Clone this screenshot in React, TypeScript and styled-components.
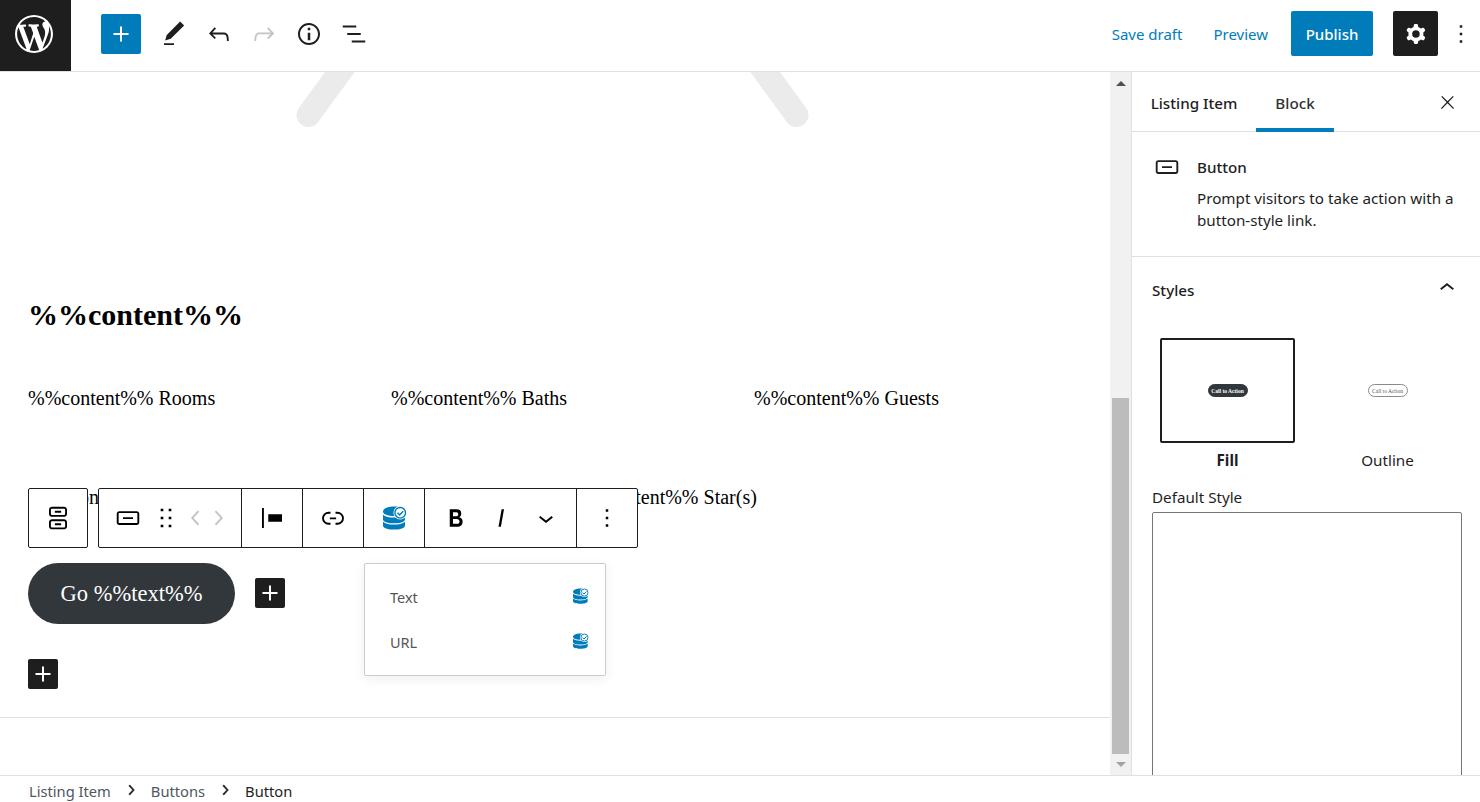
import React from 'react'
import styled, { createGlobalStyle } from 'styled-components'

const GlobalStyle = createGlobalStyle`
  html, body {
    margin: 0;
    height: 100%;
    overflow: hidden;
    background: #fff;
  }
  * {
    box-sizing: border-box;
  }
`

const uiFont = `"Noto Sans", "Open Sans", sans-serif`
const contentFont = `"Liberation Serif", serif`
const blue = '#007cba'
const dark = '#1e1e1e'
const line = '#e0e0e0'

const Page = styled.div`
  width: 1480px;
  height: 802px;
  display: flex;
  flex-direction: column;
  font-family: ${uiFont};
  color: ${dark};
`

const Header = styled.header`
  height: 72px;
  flex: none;
  display: flex;
  align-items: flex-start;
  border-bottom: 1px solid ${line};
`

const LogoTile = styled.div`
  width: 71px;
  height: 71px;
  padding: 0 4px 3px 0;
  background: ${dark};
  color: #fff;
  display: flex;
  align-items: center;
  justify-content: center;
`

const HeaderTools = styled.div`
  height: 68px;
  display: flex;
  align-items: center;
  gap: 5px;
  margin-left: 30px;
`

const AddButton = styled.button`
  width: 40px;
  height: 40px;
  margin-right: 8px;
  padding: 0;
  border: 0;
  border-radius: 2px;
  background: ${blue};
  color: #fff;
  display: flex;
  align-items: center;
  justify-content: center;
`

const ToolButton = styled.button<{ $muted?: boolean }>`
  width: 40px;
  height: 40px;
  padding: 0;
  border: 0;
  background: none;
  color: ${({ $muted }) => ($muted ? '#c4c4c4' : dark)};
  display: flex;
  align-items: center;
  justify-content: center;
`

const HeaderActions = styled.div`
  height: 67px;
  margin-left: auto;
  display: flex;
  align-items: center;
`

const TextLink = styled.a<{ $gap: number }>`
  color: ${blue};
  font-size: 15px;
  margin-right: ${({ $gap }) => $gap}px;
`

const PublishButton = styled.button`
  width: 82px;
  height: 45px;
  border: 0;
  border-radius: 2px;
  background: ${blue};
  color: #fff;
  font-family: ${uiFont};
  font-size: 15px;
  font-weight: 500;
  padding: 0;
`

const SettingsButton = styled.button`
  width: 45px;
  height: 45px;
  margin-left: 20px;
  padding: 0;
  border: 0;
  border-radius: 2px;
  background: ${dark};
  color: #fff;
  display: flex;
  align-items: center;
  justify-content: center;
`

const KebabButton = styled.button`
  width: 30px;
  height: 45px;
  margin: 0 4px 0 8px;
  padding: 0;
  border: 0;
  background: none;
  color: ${dark};
  display: flex;
  align-items: center;
  justify-content: center;
`

const Main = styled.div`
  flex: 1;
  min-height: 0;
  display: flex;
`

const Canvas = styled.main`
  width: 1110px;
  flex: none;
  position: relative;
  overflow: hidden;
  font-family: ${contentFont};
  color: #000;
`

const Placeholder = styled.svg`
  display: block;
  width: 1110px;
  height: 60px;
  color: #ebebeb;
`

const Heading = styled.h2`
  margin: 163px 0 0 28px;
  font-size: 30px;
  line-height: 40px;
  font-weight: 700;
  font-kerning: none;
`

const Columns = styled.div`
  margin: 49px 0 0 28px;
  display: grid;
  grid-template-columns: repeat(3, 363px);
  font-size: 20px;
  line-height: 28px;
`

const StarRow = styled.div`
  margin: 71px 0 0 28px;
  display: grid;
  grid-template-columns: 545px 1fr;
  font-size: 20px;
  line-height: 28px;
`

const ButtonRow = styled.div`
  margin: 52px 0 0 28px;
  display: flex;
  align-items: center;
  gap: 20px;
`

const PillButton = styled.div`
  width: 207px;
  height: 61px;
  border-radius: 31px;
  background: #32373c;
  color: #fff;
  font-size: 22.5px;
  display: flex;
  align-items: center;
  justify-content: center;
`

const InserterButton = styled.button`
  width: 30px;
  height: 30px;
  padding: 0;
  border: 0;
  border-radius: 2px;
  background: ${dark};
  color: #fff;
  display: flex;
  align-items: center;
  justify-content: center;
`

const InlineInserter = styled(InserterButton)`
  margin-bottom: 2px;
`

const AppenderRow = styled.div`
  margin: 35px 0 0 28px;
`

const EndRule = styled.hr`
  margin: 28px 0 0;
  border: 0;
  border-top: 1px solid ${line};
`

const BlockToolbar = styled.div`
  position: absolute;
  top: 416px;
  left: 28px;
  display: flex;
  gap: 10px;
`

const ToolbarGroup = styled.div`
  height: 60px;
  display: flex;
  background: #fff;
  border: 1px solid ${dark};
  border-radius: 2px;
`

const ToolbarCell = styled.div<{ $width: number; $last?: boolean }>`
  width: ${({ $width }) => $width}px;
  display: flex;
  align-items: center;
  justify-content: center;
  border-right: ${({ $last }) => ($last ? 'none' : `1px solid ${dark}`)};
`

const BlockCell = styled(ToolbarCell)`
  justify-content: flex-start;
  padding-left: 14px;
  gap: 7px;
`

const MoverIcons = styled.div`
  display: flex;
  margin-left: -8px;
  color: #c4c4c4;

  & > svg + svg {
    margin-left: -8px;
  }
`

const DatabaseCell = styled(ToolbarCell)`
  padding-left: 2px;
`

const ToolSpacer = styled.span`
  width: 15px;
`

const Popover = styled.div`
  position: absolute;
  top: 491px;
  left: 364px;
  width: 242px;
  height: 113px;
  padding: 10px 16px 0 25px;
  background: #fff;
  border: 1px solid #ccc;
  border-radius: 2px;
  box-shadow: 0 3px 12px rgba(25, 30, 35, 0.07);
  font-family: ${uiFont};
`

const PopoverRow = styled.div`
  height: 45px;
  display: flex;
  align-items: center;
  justify-content: space-between;
  font-size: 14.5px;

  & > span {
    color: #555;
  }

  & > svg {
    margin-bottom: 2px;
  }
`

const Scrollbar = styled.div`
  width: 22px;
  flex: none;
  background: #f1f1f1;
  display: flex;
  flex-direction: column;
  align-items: center;
  border-right: 1px solid ${line};
  padding: 9px 2px 0;
`

const ScrollArrow = styled.div<{ $down?: boolean }>`
  width: 0;
  height: 0;
  flex: none;
  border-left: 5px solid transparent;
  border-right: 5px solid transparent;
  ${({ $down }) => ($down ? 'border-top: 5px solid #a3a3a3;' : 'border-bottom: 5px solid #505050;')}
`

const ScrollThumb = styled.div`
  width: 17px;
  height: 356px;
  flex: none;
  margin: 312px 0 8px;
  background: #bcbcbc;
`

const Sidebar = styled.aside`
  flex: 1;
  min-width: 0;
  overflow: hidden;
`

const Tabs = styled.div`
  height: 60px;
  display: flex;
  align-items: stretch;
  border-bottom: 1px solid ${line};
  font-size: 15.2px;
`

const Tab = styled.div<{ $active?: boolean; $width: number }>`
  width: ${({ $width }) => $width}px;
  height: 60px;
  padding-top: 2px;
  display: flex;
  align-items: center;
  justify-content: center;
  font-weight: 500;
  color: ${({ $active }) => ($active ? '#2f2f2f' : dark)};
  box-shadow: ${({ $active }) => ($active ? `inset 0 -4px 0 ${blue}` : 'none')};
`

const CloseButton = styled.button`
  width: 30px;
  height: 60px;
  margin: 0 18px 0 auto;
  padding: 0;
  border: 0;
  background: none;
  color: ${dark};
  display: flex;
  align-items: center;
  justify-content: center;
`

const BlockCard = styled.section`
  height: 125px;
  display: flex;
  padding: 20px 20px 0 20px;
  gap: 15px;
  border-bottom: 1px solid ${line};
`

const BlockCardIcon = styled.div`
  width: 30px;
  height: 30px;
  flex: none;
`

const BlockTitle = styled.div`
  font-size: 15.2px;
  font-weight: 500;
  line-height: 30px;
`

const BlockDescription = styled.p`
  margin: 5px 0 0;
  font-size: 15.2px;
  line-height: 22px;
`

const StylesPanel = styled.section`
  padding: 0 18px 0 20px;
`

const PanelTitle = styled.div`
  height: 67px;
  display: flex;
  align-items: center;
  justify-content: space-between;
  font-size: 15.2px;
  font-weight: 500;
  padding-bottom: 1px;

  & > svg {
    margin-bottom: 5px;
  }
`

const StyleGrid = styled.div`
  margin: 14px 0 0 8px;
  display: grid;
  grid-template-columns: 135px 135px;
  column-gap: 25px;
`

const StyleOption = styled.div<{ $selected?: boolean }>`
  display: flex;
  flex-direction: column;
  align-items: center;
  font-size: 15.2px;
  font-weight: ${({ $selected }) => ($selected ? 700 : 400)};
`

const StylePreview = styled.div<{ $selected?: boolean }>`
  width: 135px;
  height: 105px;
  border: 2px solid ${({ $selected }) => ($selected ? dark : 'transparent')};
  border-radius: 2px;
  display: flex;
  align-items: center;
  justify-content: center;
  margin-bottom: 6px;
`

const MiniButton = styled.div<{ $outline?: boolean }>`
  width: 40px;
  height: 13px;
  border-radius: 7px;
  border: 1px solid ${({ $outline }) => ($outline ? '#8a8a8a' : '#32373c')};
  background: ${({ $outline }) => ($outline ? '#fff' : '#32373c')};
  color: ${({ $outline }) => ($outline ? '#555' : '#fff')};
  font-family: ${contentFont};
  font-size: 5.5px;
  font-weight: ${({ $outline }) => ($outline ? 400 : 700)};
  display: flex;
  align-items: center;
  justify-content: center;
  white-space: nowrap;
`

const OptionLabel = styled.span`
  line-height: 22px;
`

const FieldLabel = styled.label`
  display: block;
  margin-top: 16px;
  font-size: 15.2px;
  line-height: 20px;
`

const StyleSelect = styled.div`
  width: 310px;
  height: 290px;
  margin-top: 5px;
  border: 1px solid #757575;
  border-radius: 2px;
`

const Footer = styled.footer`
  height: 27px;
  flex: none;
  display: flex;
  align-items: center;
  padding: 3px 0 0 29px;
  border-top: 1px solid ${line};
  background: #fff;
  font-size: 14.7px;
`

const Crumb = styled.span<{ $current?: boolean }>`
  color: ${({ $current }) => ($current ? dark : '#50575e')};
`

const CrumbArrow = styled.svg`
  width: 20px;
  height: 20px;
  margin: -2px 10px 0 10px;
  color: ${dark};
  stroke: currentColor;
  stroke-width: 0.8;
`

const Icon = ({ d, size = 30 }: { d: string; size?: number }) => (
  <svg width={size} height={size} viewBox="0 0 24 24" fill="currentColor" fillRule="evenodd">
    <path d={d} />
  </svg>
)

const icons = {
  plus: 'M18 11.2h-5.2V6h-1.6v5.2H6v1.6h5.2V18h1.6v-5.2H18z',
  edit: 'M20.1 5.1L16.9 2 6.2 12.7l-1.3 4.4 4.5-1.3L20.1 5.1zM4 20.8h8v-1.5H4v1.5z',
  undo: 'M18.3 11.7c-.6-.6-1.4-.9-2.3-.9H6.7l2.9-3.3-1.1-1-4.5 5L8.5 16l1-1-2.7-2.7H16c.5 0 .9.2 1.3.5 1 1 1 3.4 1 4.5v.3h1.5v-.2c0-1.5 0-4.3-1.5-5.7z',
  redo: 'M15.6 6.5l-1.1 1 2.9 3.3H8c-.9 0-1.7.3-2.3.9-1.4 1.5-1.4 4.2-1.4 5.6v.2h1.5v-.3c0-1.1 0-3.5 1-4.5.3-.3.7-.5 1.3-.5h9.2L14.5 15l1.1 1.1 4.6-4.6-4.6-5z',
  info: 'M12 3.2c-4.8 0-8.8 3.9-8.8 8.8 0 4.8 3.9 8.8 8.8 8.8 4.8 0 8.8-3.9 8.8-8.8 0-4.8-4-8.8-8.8-8.8zm0 16c-4 0-7.2-3.3-7.2-7.2C4.8 8 8 4.8 12 4.8s7.2 3.3 7.2 7.2c0 4-3.2 7.2-7.2 7.2zM11 17h2v-6h-2v6zm0-8h2V7h-2v2z',
  list: 'M13.8 5.2H3v1.5h10.8V5.2zm-3.6 12v1.5H21v-1.5H10.2zm7.2-6H6.6v1.5h10.8v-1.5z',
  cog: 'M10.289 4.836A1 1 0 0111.275 4h1.306a1 1 0 01.987.836l.244 1.466c.787.26 1.503.679 2.108 1.218l1.393-.522a1 1 0 011.216.437l.653 1.13a1 1 0 01-.23 1.273l-1.148.944a6.025 6.025 0 010 2.435l1.149.946a1 1 0 01.23 1.272l-.653 1.13a1 1 0 01-1.216.437l-1.394-.522c-.605.54-1.32.958-2.108 1.218l-.244 1.466a1 1 0 01-.987.836h-1.306a1 1 0 01-.986-.836l-.244-1.466a5.995 5.995 0 01-2.108-1.218l-1.394.522a1 1 0 01-1.217-.436l-.653-1.131a1 1 0 01.23-1.272l1.149-.946a6.026 6.026 0 010-2.435l-1.148-.944a1 1 0 01-.23-1.272l.653-1.131a1 1 0 011.217-.437l1.393.522a5.994 5.994 0 012.108-1.218l.244-1.466zM14.929 12a3 3 0 11-6 0 3 3 0 016 0z',
  more: 'M13 19h-2v-2h2v2zm0-6h-2v-2h2v2zm0-6h-2V5h2v2z',
  close: 'M13 11.8l6.1-6.3-1-1-6.1 6.2-6.1-6.2-1 1 6.1 6.3-6.5 6.7 1 1 6.5-6.6 6.5 6.6 1-1z',
  button: 'M19 6.5H5c-1.1 0-2 .9-2 2v7c0 1.1.9 2 2 2h14c1.1 0 2-.9 2-2v-7c0-1.1-.9-2-2-2zm.5 9c0 .3-.2.5-.5.5H5c-.3 0-.5-.2-.5-.5v-7c0-.3.2-.5.5-.5h14c.3 0 .5.2.5.5v7zM8 12.8h8v-1.5H8v1.5z',
  buttons: 'M16.7 3H7.3C6 3 4.8 4 4.8 5.3v3.4C4.8 10 6 11 7.3 11h9.4c1.3 0 2.5-1 2.5-2.3V5.3C19.2 4 18 3 16.7 3zm1 5.7c0 .5-.5.8-1 .8H7.3c-.5 0-1-.3-1-.8V5.3c0-.5.5-.8 1-.8h9.4c.5 0 1 .3 1 .8v3.4zM9.5 7.75h5v-1.5h-5v1.5zM16.7 13H7.3C6 13 4.8 14 4.8 15.3v3.4C4.8 20 6 21 7.3 21h9.4c1.3 0 2.5-1 2.5-2.3v-3.4c0-1.3-1.2-2.3-2.5-2.3zm1 5.7c0 .5-.5.8-1 .8H7.3c-.5 0-1-.3-1-.8v-3.4c0-.5.5-.8 1-.8h9.4c.5 0 1 .3 1 .8v3.4zM9.5 17.75h5v-1.5h-5v1.5z',
  drag: 'M8 7h2V5H8v2zm0 6h2v-2H8v2zm0 6h2v-2H8v2zm6-14v2h2V5h-2zm0 8h2v-2h-2v2zm0 6h2v-2h-2v2z',
  left: 'M14.6 7l-1.2-1L8 12l5.4 6 1.2-1-4.6-5z',
  right: 'M10.6 6L9.4 7l4.6 5-4.6 5 1.2 1 5.4-6z',
  align: 'M9 9v6h11V9H9zM4 20h1.5V4H4v16z',
  link: 'M10 17.389H8.444A5.194 5.194 0 1 1 8.444 7H10v1.5H8.444a3.694 3.694 0 0 0 0 7.389H10v1.5ZM14 7h1.556a5.194 5.194 0 0 1 0 10.39H14v-1.5h1.556a3.694 3.694 0 0 0 0-7.39H14V7Zm-4.5 6h5v-1.5h-5V13Z',
  bold: 'M14.7 11.3c1-.6 1.5-1.6 1.5-3 0-2.3-1.3-3.4-4-3.4H7v14h5.8c1.4 0 2.5-.3 3.3-1 .8-.7 1.2-1.7 1.2-2.9.1-1.9-.8-3.1-2.6-3.7zm-5.1-4h2.3c.6 0 1.1.1 1.4.4.3.3.5.7.5 1.2s-.2 1-.5 1.2c-.3.3-.8.4-1.4.4H9.6V7.3zm4.6 9c-.4.3-1 .4-1.7.4H9.6v-3.9h2.9c.7 0 1.3.2 1.7.5.4.3.6.8.6 1.5s-.2 1.2-.6 1.5z',
  italic: 'M12.5 5L10 19h1.9l2.5-14z',
  down: 'M17.5 11.6L12 16l-5.5-4.4.9-1.2L12 14l4.5-3.6 1 1.2z',
  up: 'M6.5 12.4L12 8l5.5 4.4-.9 1.2L12 10l-4.5 3.6-1-1.2z',
}

const WordPressLogo = () => (
  <svg width="38" height="38" viewBox="0 0 20 20" fill="currentColor">
    <path d="M20 10c0-5.51-4.49-10-10-10C4.48 0 0 4.49 0 10c0 5.52 4.48 10 10 10 5.51 0 10-4.48 10-10zM7.78 15.37L4.37 6.22c.55-.02 1.17-.08 1.17-.08.5-.06.44-1.13-.06-1.11 0 0-1.45.11-2.37.11-.18 0-.37 0-.58-.01C4.12 2.69 6.87 1.11 10 1.11c2.33 0 4.45.87 6.05 2.34-.68-.11-1.65.39-1.65 1.58 0 .74.45 1.36.9 2.1.35.61.55 1.36.55 2.46 0 1.49-1.4 5-1.4 5l-3.03-8.37c.54-.02.82-.17.82-.17.5-.05.44-1.25-.06-1.22 0 0-1.44.12-2.38.12-.87 0-2.33-.12-2.33-.12-.5-.03-.56 1.2-.06 1.22l.92.08 1.26 3.41zM17.41 10c.24-.64.74-1.87.43-4.25.7 1.29 1.05 2.71 1.05 4.25 0 3.29-1.73 6.24-4.4 7.78.97-2.59 1.94-5.2 2.92-7.78zM6.1 18.09C3.12 16.65 1.11 13.53 1.11 10c0-1.3.23-2.48.72-3.59C3.25 10.3 4.67 14.2 6.1 18.09zm4.03-6.63l2.58 6.98c-.86.29-1.76.45-2.71.45-.79 0-1.57-.11-2.29-.33.81-2.38 1.62-4.74 2.42-7.1z" />
  </svg>
)

const DatabaseIcon = ({ size }: { size: number }) => (
  <svg width={size} height={size} viewBox="0 0 24 24" fill={blue}>
    <path d="M0 5.5C0 2.6 4.7 .6 11 .6s11 2 11 4.9S17.3 10 11 10 0 8.4 0 5.5z" />
    <path d="M0 8.8C2 10.8 6.5 11.6 11 11.6s9-.8 11-2.8v4.6c0 2.4-4.7 3.9-11 3.9S0 15.8 0 13.4z" />
    <path d="M0 15.8C2 17.8 6.5 18.6 11 18.6s9-.8 11-2.8v3.6c0 2.7-4.7 4.2-11 4.2S0 22.1 0 19.4z" />
    <circle cx="17.2" cy="6.8" r="6.8" fill="#fff" />
    <circle cx="17.2" cy="6.8" r="5.3" fill="none" stroke={blue} strokeWidth="1.4" />
    <path d="M14.4 6.8l2.2 2.2 3.6-3.8" fill="none" stroke={blue} strokeWidth="1.5" />
  </svg>
)

export default function App(): JSX.Element {
  return (
    <Page>
      <GlobalStyle />
      <Header>
        <LogoTile>
          <WordPressLogo />
        </LogoTile>
        <HeaderTools>
          <AddButton>
            <Icon d={icons.plus} />
          </AddButton>
          <ToolButton><Icon d={icons.edit} /></ToolButton>
          <ToolButton><Icon d={icons.undo} /></ToolButton>
          <ToolButton $muted><Icon d={icons.redo} /></ToolButton>
          <ToolButton><Icon d={icons.info} /></ToolButton>
          <ToolButton><Icon d={icons.list} /></ToolButton>
        </HeaderTools>
        <HeaderActions>
          <TextLink $gap={31}>Save draft</TextLink>
          <TextLink $gap={23}>Preview</TextLink>
          <PublishButton>Publish</PublishButton>
          <SettingsButton><Icon d={icons.cog} /></SettingsButton>
          <KebabButton><Icon d={icons.more} /></KebabButton>
        </HeaderActions>
      </Header>

      <Main>
        <Canvas>
          <Placeholder viewBox="0 0 1110 60" fill="none">
            <path
              d="M308.5 43L345 -7M796.5 43L760 -7"
              stroke="currentColor"
              strokeWidth="24"
              strokeLinecap="round"
            />
          </Placeholder>
          <Heading>%%content%%</Heading>
          <Columns>
            <div>%%content%% Rooms</div>
            <div>%%content%% Baths</div>
            <div>%%content%% Guests</div>
          </Columns>
          <StarRow>
            <div>Location</div>
            <div>%%content%% Star(s)</div>
          </StarRow>
          <ButtonRow>
            <PillButton>Go %%text%%</PillButton>
            <InlineInserter><Icon d={icons.plus} /></InlineInserter>
          </ButtonRow>
          <AppenderRow>
            <InserterButton><Icon d={icons.plus} /></InserterButton>
          </AppenderRow>
          <EndRule />

          <BlockToolbar>
            <ToolbarGroup>
              <ToolbarCell $width={58} $last><Icon d={icons.buttons} /></ToolbarCell>
            </ToolbarGroup>
            <ToolbarGroup>
              <BlockCell $width={143}>
                <Icon d={icons.button} />
                <Icon d={icons.drag} size={32} />
                <MoverIcons>
                  <Icon d={icons.left} />
                  <Icon d={icons.right} />
                </MoverIcons>
              </BlockCell>
              <ToolbarCell $width={61}><Icon d={icons.align} /></ToolbarCell>
              <ToolbarCell $width={61}><Icon d={icons.link} /></ToolbarCell>
              <DatabaseCell $width={61}><DatabaseIcon size={24} /></DatabaseCell>
              <ToolbarCell $width={152}>
                <Icon d={icons.bold} />
                <ToolSpacer />
                <Icon d={icons.italic} />
                <ToolSpacer />
                <Icon d={icons.down} />
              </ToolbarCell>
              <ToolbarCell $width={60} $last><Icon d={icons.more} /></ToolbarCell>
            </ToolbarGroup>
          </BlockToolbar>

          <Popover>
            <PopoverRow><span>Text</span><DatabaseIcon size={16} /></PopoverRow>
            <PopoverRow><span>URL</span><DatabaseIcon size={16} /></PopoverRow>
          </Popover>
        </Canvas>

        <Scrollbar>
          <ScrollArrow />
          <ScrollThumb />
          <ScrollArrow $down />
        </Scrollbar>

        <Sidebar>
          <Tabs>
            <Tab $width={124}>Listing Item</Tab>
            <Tab $width={78} $active>Block</Tab>
            <CloseButton><Icon d={icons.close} size={21} /></CloseButton>
          </Tabs>
          <BlockCard>
            <BlockCardIcon><Icon d={icons.button} /></BlockCardIcon>
            <div>
              <BlockTitle>Button</BlockTitle>
              <BlockDescription>Prompt visitors to take action with a button-style link.</BlockDescription>
            </div>
          </BlockCard>
          <StylesPanel>
            <PanelTitle>
              Styles
              <Icon d={icons.up} />
            </PanelTitle>
            <StyleGrid>
              <StyleOption $selected>
                <StylePreview $selected><MiniButton>Call to Action</MiniButton></StylePreview>
                <OptionLabel>Fill</OptionLabel>
              </StyleOption>
              <StyleOption>
                <StylePreview><MiniButton $outline>Call to Action</MiniButton></StylePreview>
                <OptionLabel>Outline</OptionLabel>
              </StyleOption>
            </StyleGrid>
            <FieldLabel>Default Style</FieldLabel>
            <StyleSelect />
          </StylesPanel>
        </Sidebar>
      </Main>

      <Footer>
        <Crumb>Listing Item</Crumb>
        <CrumbArrow viewBox="0 0 24 24" fill="currentColor"><path d={icons.right} /></CrumbArrow>
        <Crumb>Buttons</Crumb>
        <CrumbArrow viewBox="0 0 24 24" fill="currentColor"><path d={icons.right} /></CrumbArrow>
        <Crumb $current>Button</Crumb>
      </Footer>
    </Page>
  )
}
